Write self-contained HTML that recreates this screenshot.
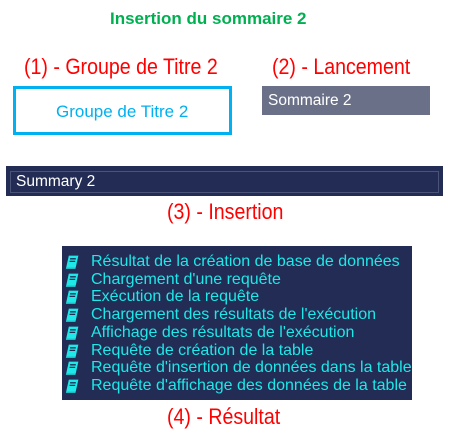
<!DOCTYPE html>
<html><head><meta charset="utf-8"><style>
body{margin:0;width:449px;height:441px;background:#fff;font-family:"Liberation Sans",sans-serif;position:relative;overflow:hidden}
.a{position:absolute;white-space:nowrap}
.red{color:#f00;font-size:22px;transform-origin:left top;transform:scaleX(.89)}
.li{position:absolute;left:91px;color:#1ee8e8;font-size:16px;white-space:nowrap;line-height:17px}
.ic{position:absolute;left:65px;width:14px;height:14px}
</style></head><body>
<div class="a" style="left:110px;top:9px;color:#00b050;font-weight:bold;font-size:17px">Insertion du sommaire 2</div>
<div class="a red" style="left:24px;top:54px">(1) - Groupe de Titre 2</div>
<div class="a red" style="left:272px;top:54px">(2) - Lancement</div>
<div class="a" style="left:13px;top:86px;width:213px;height:43px;border:3px solid #00b0f0"></div>
<div class="a" style="left:56px;top:102px;color:#00b0f0;font-size:17px">Groupe de Titre 2</div>
<div class="a" style="left:262px;top:86px;width:168px;height:29px;background:#6b7089"></div>
<div class="a" style="left:268px;top:92px;color:#fff;font-size:15.5px">Sommaire 2</div>
<div class="a" style="left:6px;top:166px;width:437px;height:30px;background:#222c54"></div>
<div class="a" style="left:10px;top:171px;width:427px;height:20px;border:1px solid #4a5478"></div>
<div class="a" style="left:16px;top:173px;color:#fff;font-size:15.5px">Summary 2</div>
<div class="a red" style="left:167px;top:199px">(3) - Insertion</div>
<div class="a" style="left:62px;top:246px;width:350px;height:154px;background:#222c54"></div>
<div class="a red" style="left:167px;top:404px">(4) - Résultat</div>
<div id="L"></div>
<script>
var t=["Résultat de la création de base de données","Chargement d'une requête","Exécution de la requête","Chargement des résultats de l'exécution","Affichage des résultats de l'exécution","Requête de création de la table","Requête d'insertion de données dans la table","Requête d'affichage des données de la table"];
var h="";t.forEach(function(s,i){var y=253+i*17.7;
h+='<div class="li" style="top:'+y+'px">'+s+'</div>';
h+='<svg class="ic" style="top:'+(y+2)+'px" viewBox="0 0 11 11"><path d="M3 0.5H10.5L8.5 9.5H1Z" fill="#1ee8e8"/><path d="M1 9.5H8.5L8.2 10.8H0.7Z" fill="#1ee8e8"/><path d="M4 3H8.5M3.6 5H8" stroke="#222c54" stroke-width="1"/></svg>';});
document.getElementById("L").innerHTML=h;
</script>
</body></html>
